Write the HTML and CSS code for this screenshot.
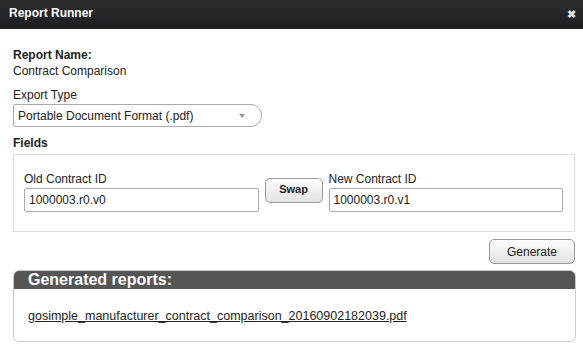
FILE: index.html
```html
<!DOCTYPE html>
<html lang="en">
<head>
    <meta charset="UTF-8">
    <title>Report Runner</title>
    <link rel="stylesheet" href="styles.css">
</head>
<body>
    <div class="titlebar">
        <span class="title">Report Runner</span>
        <span class="close">&#x2716;</span>
    </div>

    <div class="content">
        <div class="label-bold">Report Name:</div>
        <div class="report-name">Contract Comparison</div>

        <div class="label">Export Type</div>
        <div class="select">
            <span>Portable Document Format (.pdf)</span>
            <span class="arrow"></span>
        </div>

        <div class="label-bold fields-title">Fields</div>
        <div class="fields">
            <div class="field">
                <div class="label">Old Contract ID</div>
                <div class="input old">1000003.r0.v0</div>
            </div>
            <button class="btn swap">Swap</button>
            <div class="field">
                <div class="label">New Contract ID</div>
                <div class="input new">1000003.r0.v1</div>
            </div>
        </div>

        <div class="actions">
            <button class="btn generate">Generate</button>
        </div>

        <div class="panel">
            <div class="panel-head">Generated reports:</div>
            <div class="panel-body">
                <a href="#">gosimple_manufacturer_contract_comparison_20160902182039.pdf</a>
            </div>
        </div>
    </div>
</body>
</html>
```

FILE: styles.css
```css
body {
    margin: 0;
    font-family: "Liberation Sans", Arial, sans-serif;
    font-size: 12px;
    color: #222;
    background-color: #fff;
}

.titlebar {
    height: 29px;
    display: flex;
    align-items: center;
    justify-content: space-between;
    padding: 0 7px 0 9px;
    background: linear-gradient(#2b2e31, #1c1e20);
}

.title {
    color: #fff;
    font-weight: bold;
    font-size: 12px;
    margin-top: -3px;
}

.close {
    color: #ddd;
    font-size: 11px;
    font-weight: bold;
    margin-top: -1px;
}

.content {
    padding: 19px 8px 0 13px;
}

.label-bold {
    font-weight: bold;
    line-height: 15px;
}

.report-name {
    line-height: 16px;
    margin-bottom: 9px;
}

.label {
    line-height: 15px;
}

.select {
    width: 243px;
    height: 21px;
    margin-top: 1px;
    border: 1px solid #aaa;
    border-radius: 2px 11px 11px 2px;
    display: flex;
    align-items: center;
    justify-content: space-between;
    padding: 0 0 0 4px;
    box-sizing: content-box;
}

.arrow {
    width: 0;
    height: 0;
    border-left: 3px solid transparent;
    border-right: 3px solid transparent;
    border-top: 4px solid #999;
    margin-right: 16px;
}

.fields-title {
    margin-top: 9px;
}

.fields {
    margin-top: 3px;
    width: 539px;
    height: 54px;
    border: 1px solid #ddd;
    padding: 17px 11px 5px 10px;
    display: flex;
    align-items: flex-start;
    gap: 6px;
}

.field {
    flex: 1;
}

.input {
    margin-top: 1px;
    height: 22px;
    border: 1px solid #aaa;
    border-radius: 2px;
    line-height: 22px;
    padding: 0 4px;
}

.btn {
    font-family: "Liberation Sans", Arial, sans-serif;
    font-size: 11px;
    font-weight: bold;
    color: #222;
    border: 1px solid #999;
    border-radius: 5px;
    background: linear-gradient(#fdfdfd, #e2e2e2);
    cursor: pointer;
}

.swap {
    width: 58px;
    height: 25px;
    margin-top: 6px;
    padding: 0 0 4px;
}

.actions {
    display: flex;
    justify-content: flex-end;
    margin-top: 7px;
}

.generate {
    width: 86px;
    height: 25px;
    font-weight: normal;
    font-size: 12px;
}

.panel {
    margin-top: 6px;
    width: 561px;
    border: 1px solid #ccc;
    border-radius: 6px;
    overflow: hidden;
}

.panel-head {
    background-color: #555;
    color: #fff;
    font-size: 16px;
    font-weight: bold;
    height: 18px;
    line-height: 17px;
    padding-left: 14px;
}

.panel-body {
    height: 52px;
    padding: 20px 0 0 14px;
    box-sizing: border-box;
}

.panel-body a {
    color: #222;
    font-size: 12.5px;
}
```
